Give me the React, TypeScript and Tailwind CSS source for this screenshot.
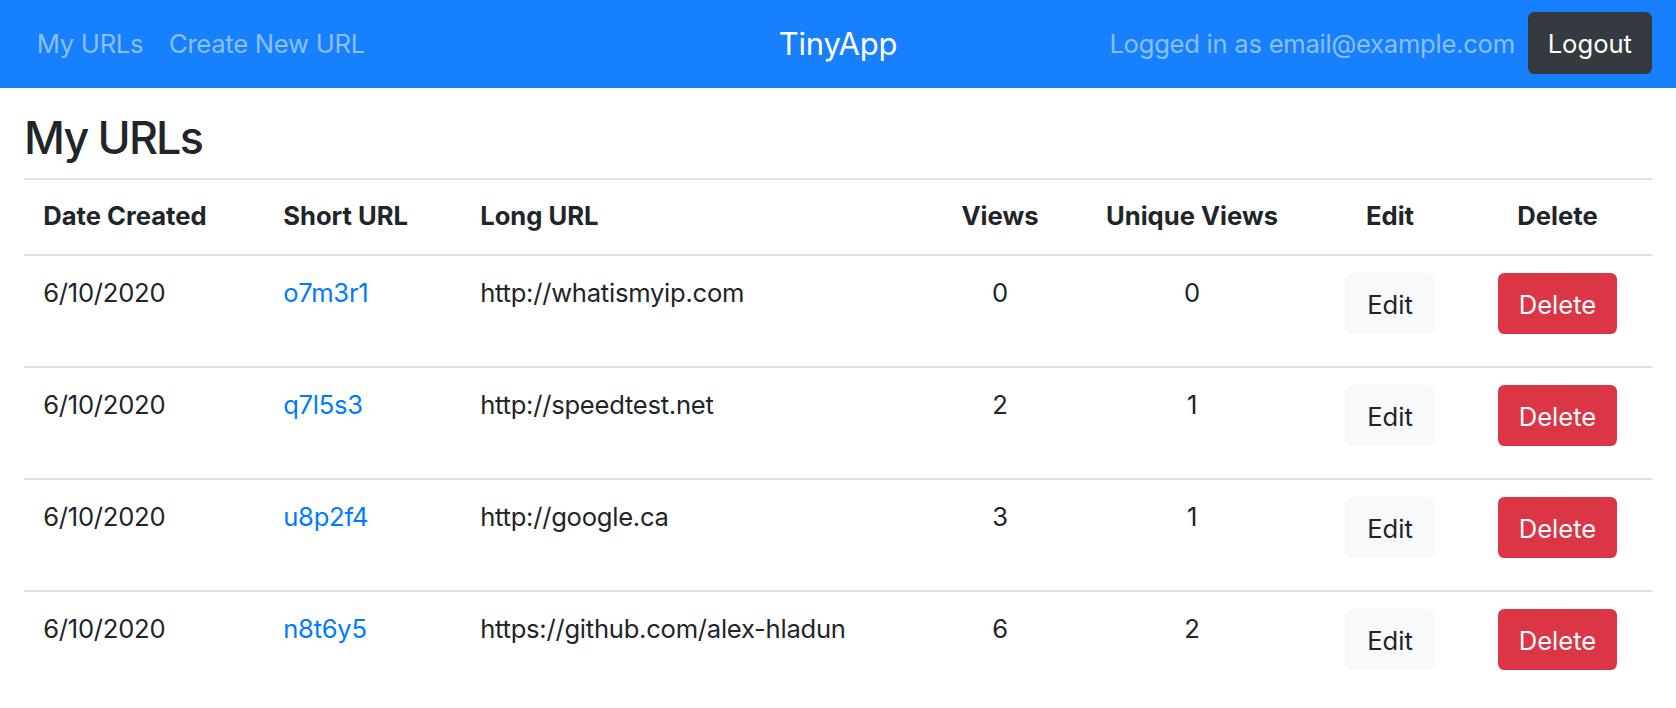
import React from "react";

const rows = [
  { date: "6/10/2020", short: "o7m3r1", long: "http://whatismyip.com", views: 0, unique: 0 },
  { date: "6/10/2020", short: "q7l5s3", long: "http://speedtest.net", views: 2, unique: 1 },
  { date: "6/10/2020", short: "u8p2f4", long: "http://google.ca", views: 3, unique: 1 },
  { date: "6/10/2020", short: "n8t6y5", long: "https://github.com/alex-hladun", views: 6, unique: 2 },
];

const gridCols = "grid grid-cols-[240px_197px_472px_134px_250px_146px_189px]";

export default function App() {
  return (
    <div className="min-h-screen bg-white font-['Inter','Liberation_Sans',sans-serif] text-[25.6px] tracking-[-0.01em] text-[#212529]">
      <nav className="grid h-[88px] grid-cols-[1fr_auto_1fr] items-center bg-[#1780fc] px-[24px]">
        <div className="flex items-center">
          <a className="px-[12.8px] leading-[38.4px] text-white/50">My URLs</a>
          <a className="px-[12.8px] leading-[38.4px] text-white/50">Create New URL</a>
        </div>
        <div className="text-[31px] leading-[48px] text-white">TinyApp</div>
        <div className="flex items-center justify-end">
          <span className="px-[12.8px] leading-[38.4px] text-white/50">Logged in as email@example.com</span>
          <button className="mb-[2px] flex h-[62px] items-center rounded-[6.4px] bg-[#343a40] px-[20px] pt-[2px] leading-[38.4px] tracking-normal text-white">
            Logout
          </button>
        </div>
      </nav>

      <main className="px-[24px]">
        <h3 className="mt-[24px] mb-[12px] text-[44.8px] font-medium leading-[1.2] tracking-[-0.04em]">My URLs</h3>

        <div className={`${gridCols} border-t-2 border-[#dee2e6] font-bold leading-[38px] tracking-normal`}>
          <div className="px-[19.2px] pt-[17px] pb-[19px]">Date Created</div>
          <div className="px-[19.2px] pt-[17px] pb-[19px]">Short URL</div>
          <div className="px-[19.2px] pt-[17px] pb-[19px]">Long URL</div>
          <div className="px-[19.2px] pt-[17px] pb-[19px] text-center">Views</div>
          <div className="px-[19.2px] pt-[17px] pb-[19px] text-center">Unique Views</div>
          <div className="px-[19.2px] pt-[17px] pb-[19px] text-center">Edit</div>
          <div className="px-[19.2px] pt-[17px] pb-[19px] text-center">Delete</div>
        </div>

        {rows.map((r) => (
          <div key={r.short} className={`${gridCols} h-[112px] border-t-2 border-[#dee2e6] leading-[38px]`}>
            <div className="px-[19.2px] pt-[18px]">{r.date}</div>
            <div className="px-[19.2px] pt-[18px]">
              <a className="text-[#007bff]">{r.short}</a>
            </div>
            <div className="px-[19.2px] pt-[18px]">{r.long}</div>
            <div className="px-[19.2px] pt-[18px] text-center">{r.views}</div>
            <div className="px-[19.2px] pt-[18px] text-center">{r.unique}</div>
            <div className="flex justify-center px-[19.2px] pt-[17px]">
              <button className="flex h-[61px] items-center rounded-[6.4px] bg-[#f8f9fa] px-[22px] pt-[3px] leading-[38px] tracking-normal text-[#212529]">
                Edit
              </button>
            </div>
            <div className="flex justify-center px-[19.2px] pt-[17px]">
              <button className="flex h-[61px] items-center rounded-[6.4px] bg-[#dc3545] px-[21px] pt-[3px] leading-[38px] tracking-normal text-white">
                Delete
              </button>
            </div>
          </div>
        ))}
      </main>
    </div>
  );
}
